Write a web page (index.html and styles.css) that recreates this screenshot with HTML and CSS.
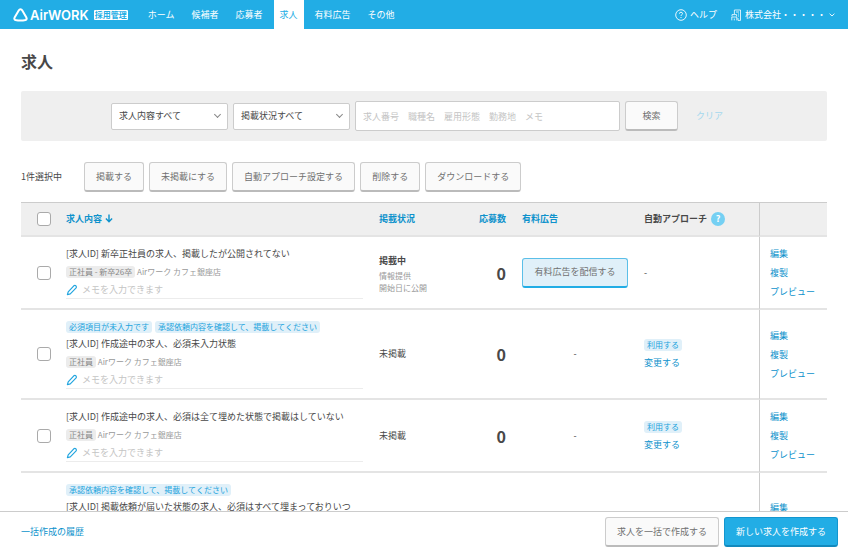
FILE: index.html
```html
<!DOCTYPE html>
<html lang="ja">
<head>
  <meta charset="UTF-8">
  <meta name="viewport" content="width=device-width, initial-scale=1.0">
  <title>求人 - AirWORK 採用管理</title>
  <link rel="stylesheet" href="styles.css">
</head>
<body>

<svg class="sprite" aria-hidden="true">
  <symbol id="icon-pen" viewBox="0 0 12 12">
    <path d="M1.4 10.6 L2.2 7.8 L7.8 1.8 Q8.8 0.9 9.9 1.8 Q10.9 2.8 10.1 3.9 L4.3 9.8 Z" fill="none" stroke="#22a5df" stroke-width="1.2" stroke-linejoin="round"/>
  </symbol>
</svg>

<header class="header">
  <a href="#" class="logo">
    <svg class="logo-mark" viewBox="0 0 15 14" aria-hidden="true">
      <path d="M7.5 1.3 Q8.6 1.3 9.3 2.5 L13.4 9.6 Q14.2 11.2 12.6 12 Q7.5 13.2 2.4 12 Q0.8 11.2 1.6 9.6 L5.7 2.5 Q6.4 1.3 7.5 1.3 Z" fill="none" stroke="#fff" stroke-width="2" stroke-linejoin="round"/>
    </svg>
    <span class="logo-text">AirWORK</span>
    <span class="logo-badge">採用管理</span>
  </a>
  <nav class="nav">
    <a href="#">ホーム</a>
    <a href="#">候補者</a>
    <a href="#">応募者</a>
    <a href="#" class="current">求人</a>
    <a href="#">有料広告</a>
    <a href="#">その他</a>
  </nav>
  <div class="header-right">
    <a href="#">
      <svg class="icon-help" viewBox="0 0 12 12" aria-hidden="true">
        <circle cx="6" cy="6" r="5.3" fill="none" stroke="#fff" stroke-width="0.9"/>
        <path d="M4.4 4.7 Q4.5 3.2 6 3.2 Q7.5 3.3 7.5 4.6 Q7.5 5.4 6.6 5.9 Q6 6.2 6 7" fill="none" stroke="#fff" stroke-width="0.9"/>
        <circle cx="6" cy="8.5" r="0.6" fill="#fff"/>
      </svg>
      ヘルプ
    </a>
    <a href="#" class="company">
      <svg class="icon-building" viewBox="0 0 11 12" aria-hidden="true">
        <path d="M3.4 5 V1 H9.5 V11.4 H7 V9 M1 7.4 V5.6 H5.6 V7.4 M0.8 11.4 V8 H5.8 V11.4 M3.3 11.4 V9.6 M5 3 H8 M7 5 H8 M7 7 H8" fill="none" stroke="#fff" stroke-width="0.8"/>
      </svg>
      株式会社・・・・・
      <svg class="icon-caret" viewBox="0 0 6 4" aria-hidden="true">
        <path d="M0.6 0.7 L3 3 L5.4 0.7" fill="none" stroke="#fff" stroke-width="0.9"/>
      </svg>
    </a>
  </div>
</header>

<main class="main">
  <h1>求人</h1>

  <form class="filter">
    <div class="select">
      <select aria-label="求人内容">
        <option>求人内容すべて</option>
      </select>
    </div>
    <div class="select">
      <select aria-label="掲載状況">
        <option>掲載状況すべて</option>
      </select>
    </div>
    <input type="text" class="keyword" aria-label="キーワード" placeholder="求人番号　職種名　雇用形態　勤務地　メモ">
    <button type="button" class="btn btn-search">検索</button>
    <a href="#" class="clear">クリア</a>
  </form>

  <div class="bulk">
    <span class="bulk-count">1件選択中</span>
    <button type="button" class="btn">掲載する</button>
    <button type="button" class="btn">未掲載にする</button>
    <button type="button" class="btn">自動アプローチ設定する</button>
    <button type="button" class="btn">削除する</button>
    <button type="button" class="btn">ダウンロードする</button>
  </div>

  <table class="jobs">
    <thead>
      <tr>
        <th class="col-check"><input type="checkbox" aria-label="すべて選択"></th>
        <th class="col-job">
          <a href="#">求人内容
            <svg class="icon-sort" viewBox="0 0 8 9" aria-hidden="true">
              <path d="M4 0.5 V7.6 M0.9 4.6 L4 7.7 L7.1 4.6" fill="none" stroke="#0d92cc" stroke-width="1.4"/>
            </svg>
          </a>
        </th>
        <th class="col-status"><a href="#">掲載状況</a></th>
        <th class="col-count"><a href="#">応募数</a></th>
        <th class="col-ad"><a href="#">有料広告</a></th>
        <th class="col-auto">自動アプローチ <button type="button" class="hint" aria-label="自動アプローチについて">?</button></th>
        <th class="col-action"></th>
      </tr>
    </thead>
    <tbody>
      <tr>
        <td class="col-check"><input type="checkbox" aria-label="求人を選択"></td>
        <td class="col-job">
          <div class="job-title">[求人ID] 新卒正社員の求人、掲載したが公開されてない</div>
          <div class="job-sub"><span class="tag">正社員 - 新卒26卒</span> Airワーク カフェ銀座店</div>
          <div class="memo"><svg class="icon-pen" aria-hidden="true"><use href="#icon-pen"/></svg><input type="text" aria-label="メモ" placeholder="メモを入力できます"></div>
        </td>
        <td class="col-status">
          <strong>掲載中</strong>
          <small>情報提供<br>開始日に公開</small>
        </td>
        <td class="col-count">0</td>
        <td class="col-ad"><button type="button" class="btn btn-ad">有料広告を配信する</button></td>
        <td class="col-auto">-</td>
        <td class="col-action">
          <a href="#">編集</a>
          <a href="#">複製</a>
          <a href="#">プレビュー</a>
        </td>
      </tr>
      <tr>
        <td class="col-check"><input type="checkbox" aria-label="求人を選択"></td>
        <td class="col-job">
          <div class="job-alert"><span class="tag tag-blue">必須項目が未入力です</span><span class="tag tag-blue">承認依頼内容を確認して、掲載してください</span></div>
          <div class="job-title">[求人ID] 作成途中の求人、必須未入力状態</div>
          <div class="job-sub"><span class="tag">正社員</span> Airワーク カフェ銀座店</div>
          <div class="memo"><svg class="icon-pen" aria-hidden="true"><use href="#icon-pen"/></svg><input type="text" aria-label="メモ" placeholder="メモを入力できます"></div>
        </td>
        <td class="col-status">未掲載</td>
        <td class="col-count">0</td>
        <td class="col-ad">-</td>
        <td class="col-auto">
          <div><span class="tag tag-blue">利用する</span></div>
          <a href="#">変更する</a>
        </td>
        <td class="col-action">
          <a href="#">編集</a>
          <a href="#">複製</a>
          <a href="#">プレビュー</a>
        </td>
      </tr>
      <tr>
        <td class="col-check"><input type="checkbox" aria-label="求人を選択"></td>
        <td class="col-job">
          <div class="job-title">[求人ID] 作成途中の求人、必須は全て埋めた状態で掲載はしていない</div>
          <div class="job-sub"><span class="tag">正社員</span> Airワーク カフェ銀座店</div>
          <div class="memo"><svg class="icon-pen" aria-hidden="true"><use href="#icon-pen"/></svg><input type="text" aria-label="メモ" placeholder="メモを入力できます"></div>
        </td>
        <td class="col-status">未掲載</td>
        <td class="col-count">0</td>
        <td class="col-ad">-</td>
        <td class="col-auto">
          <div><span class="tag tag-blue">利用する</span></div>
          <a href="#">変更する</a>
        </td>
        <td class="col-action">
          <a href="#">編集</a>
          <a href="#">複製</a>
          <a href="#">プレビュー</a>
        </td>
      </tr>
      <tr>
        <td class="col-check"><input type="checkbox" aria-label="求人を選択"></td>
        <td class="col-job">
          <div class="job-alert"><span class="tag tag-blue">承認依頼内容を確認して、掲載してください</span></div>
          <div class="job-title job-title-long">[求人ID] 掲載依頼が届いた状態の求人、必須はすべて埋まっておりいつ</div>
          <div class="job-sub"><span class="tag">正社員</span></div>
          <div class="memo"><svg class="icon-pen" aria-hidden="true"><use href="#icon-pen"/></svg></div>
        </td>
        <td class="col-status"></td>
        <td class="col-count"></td>
        <td class="col-ad"></td>
        <td class="col-auto">
          <div><span class="tag tag-blue">利用する</span></div>
          <a href="#">変更する</a>
        </td>
        <td class="col-action">
          <a href="#">編集</a>
          <a href="#">複製</a>
          <a href="#">プレビュー</a>
        </td>
      </tr>
    </tbody>
  </table>
</main>

<footer class="footer">
  <a href="#" class="history">一括作成の履歴</a>
  <button type="button" class="btn">求人を一括で作成する</button>
  <button type="button" class="btn btn-primary">新しい求人を作成する</button>
</footer>

</body>
</html>
```
FILE: styles.css
```css
:root {
  --primary: #22ade5;
  --link: #0d92cc;
  --text: #484848;
  --sub: #999;
  --placeholder: #c4c4c4;
  --panel: #efefef;
  --border: #ccc;
  --pale: #e0f0f9;
}

* {
  box-sizing: border-box;
}

body {
  display: flex;
  flex-direction: column;
  height: 100vh;
  margin: 0;
  font-family: "Noto Sans CJK JP", sans-serif;
  font-size: 9px;
  line-height: 18px;
  color: var(--text);
  background: #fff;
}

a {
  color: var(--link);
  text-decoration: none;
}

button,
input,
select {
  margin: 0;
  font: inherit;
  color: inherit;
}

.sprite {
  display: block;
  width: 0;
  height: 0;
}

/* ヘッダー */
.header {
  display: flex;
  flex-shrink: 0;
  align-items: stretch;
  height: 29px;
  padding: 0 13px;
  background: var(--primary);
}

.header a {
  display: flex;
  align-items: center;
  color: #fff;
}

.logo-mark {
  width: 15px;
  height: 14px;
}

.logo-text {
  margin-left: 2px;
  font-family: Inter, sans-serif;
  font-size: 13px;
  font-weight: 600;
}

.logo-badge {
  margin-left: 5px;
  padding: 0 1px;
  border-radius: 1px;
  background: #fff;
  color: var(--primary);
  font-size: 8px;
  font-weight: bold;
  line-height: 10px;
}

.nav {
  display: flex;
  gap: 5px;
  margin-left: 14px;
}

.nav a {
  padding: 0 6px;
}

.nav .current {
  background: #fff;
  color: var(--primary);
}

.header-right {
  display: flex;
  gap: 14px;
  margin-left: auto;
}

.header-right a {
  gap: 3px;
}

.icon-help {
  width: 12px;
  height: 12px;
}

.icon-building {
  width: 11px;
  height: 12px;
}

.icon-caret {
  width: 6px;
  height: 4px;
}

/* 検索 */
.main {
  flex: 1;
  min-height: 0;
  padding: 20px 21px;
  overflow-y: auto;
  scrollbar-width: none;
}

h1 {
  margin: 0 0 18px;
  font-size: 16px;
  line-height: 24px;
}

.filter {
  display: flex;
  align-items: center;
  gap: 5px;
  height: 50px;
  padding: 0 95px 0 90px;
  border-radius: 2px;
  background: var(--panel);
}

.select {
  position: relative;
  width: 117px;
}

.select::after {
  content: "";
  position: absolute;
  top: 9px;
  right: 8px;
  width: 4px;
  height: 4px;
  border: solid #888;
  border-width: 0 1px 1px 0;
  transform: rotate(45deg);
  pointer-events: none;
}

.select select {
  display: block;
  width: 100%;
  height: 27px;
  padding: 0 7px;
  border: 1px solid var(--border);
  border-radius: 2px;
  background: #fff;
  appearance: none;
}

.keyword {
  flex: 1;
  min-width: 0;
  height: 30px;
  padding: 0 7px;
  border: 1px solid var(--border);
  border-radius: 2px;
  background: #fff;
}

input::placeholder {
  color: var(--placeholder);
  opacity: 1;
}

.btn {
  height: 30px;
  padding: 0 11px;
  border: 1px solid var(--border);
  border-bottom: 2px solid #bbb;
  border-radius: 3px;
  background: #fafafa;
  color: #707070;
  white-space: nowrap;
}

.btn-search {
  width: 53px;
}

.clear {
  padding: 0 9px 0 13px;
  color: #a4d8ee;
}

/* 一括操作 */
.bulk {
  display: flex;
  align-items: center;
  gap: 5px;
  margin: 21px 0 10px;
}

.bulk-count {
  width: 58px;
}

/* 求人一覧 */
.jobs {
  width: 100%;
  border-top: 1px solid var(--border);
  border-spacing: 0;
  table-layout: fixed;
}

.jobs th,
.jobs td {
  padding: 0;
  border-bottom: 2px solid #e4e4e4;
  text-align: left;
  vertical-align: middle;
}

.jobs th {
  height: 34px;
  background: var(--panel);
}

.jobs .col-check {
  width: 45px;
  padding-left: 16px;
}

.jobs .col-status {
  width: 81px;
}

.jobs .col-count {
  width: 62px;
  padding-right: 16px;
  text-align: right;
}

.jobs .col-ad {
  width: 122px;
}

.jobs .col-auto {
  width: 115px;
}

.jobs .col-action {
  width: 68px;
  padding-left: 10px;
  border-left: 1px solid var(--border);
}

.jobs td.col-job {
  padding: 8px 16px 9px 0;
}

.jobs td.col-count {
  font-size: 16px;
  font-weight: bold;
}

.jobs td.col-ad {
  padding-right: 16px;
  text-align: center;
}

.col-action a {
  display: block;
  line-height: 19px;
}

input[type="checkbox"] {
  display: block;
  width: 14px;
  height: 14px;
  border: 1px solid #aaa;
  border-radius: 3px;
  background: #fff;
  appearance: none;
}

input[type="checkbox"]:checked {
  border-color: var(--primary);
  background: var(--primary);
}

.icon-sort {
  width: 8px;
  height: 9px;
  margin-left: 1px;
  vertical-align: -1px;
}

.hint {
  width: 14px;
  height: 14px;
  margin-left: 2px;
  padding: 0;
  border: none;
  border-radius: 50%;
  background: #75d0f3;
  color: #fff;
  font-weight: bold;
  line-height: 14px;
}

.job-alert {
  display: flex;
  align-items: center;
  gap: 3px;
  height: 17px;
}

.job-title {
  white-space: nowrap;
}

/* 2行分の高さを確保 */
.job-title-long {
  min-height: 36px;
  white-space: normal;
}

.job-sub {
  color: var(--sub);
  font-size: 8px;
}

.tag {
  display: inline-block;
  padding: 0 3px;
  border-radius: 3px;
  background: #ececec;
  color: #888;
  font-size: 8px;
  line-height: 12px;
  white-space: nowrap;
}

.tag-blue {
  background: var(--pale);
  color: #1ba3dd;
}

.memo {
  display: flex;
  align-items: center;
  gap: 4px;
  height: 18px;
  border-bottom: 1px solid #ececec;
}

.memo input {
  flex: 1;
  min-width: 0;
  height: 17px;
  padding: 0;
  border: none;
  background: none;
}

.icon-pen {
  width: 12px;
  height: 12px;
}

.col-status strong {
  display: block;
}

.col-status small {
  display: block;
  color: var(--sub);
  font-size: 8px;
  line-height: 12px;
}

.btn-ad {
  border-color: #5bbfe8;
  border-bottom-color: var(--primary);
  background: var(--pale);
}

/* フッター */
.footer {
  display: flex;
  flex-shrink: 0;
  align-items: center;
  gap: 5px;
  height: 41px;
  padding: 0 10px 0 21px;
  border-top: 1px solid var(--border);
  background: #fff;
}

.history {
  margin-right: auto;
}

.btn-primary {
  border-color: #1396cf;
  border-bottom-color: #1289bd;
  background: var(--primary);
  color: #fff;
}
```
